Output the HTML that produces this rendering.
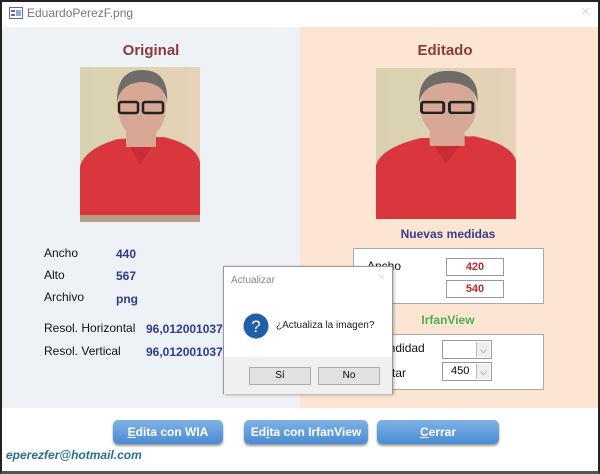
<!DOCTYPE html>
<html><head><meta charset="utf-8"><style>
*{margin:0;padding:0;box-sizing:border-box}
body{width:600px;height:474px;overflow:hidden;background:#fff;font-family:"Liberation Sans",sans-serif;position:relative}
.a{position:absolute}
.frame{left:0;top:0;width:600px;height:474px;border:2px solid #222;border-bottom:3px solid #555}
.lbl{font-size:12px;color:#111}
.val{font-size:12px;color:#2e3a8c;font-weight:bold}
.btn{background:linear-gradient(#7fb2e6,#4a8bd3);border-radius:5px;color:#fff;font-size:12px;font-weight:bold;text-align:center;line-height:24px;box-shadow:0 2px 2px #999}
.inp{background:#fff;border:1px solid #999;color:#b52b2b;font-size:11px;text-align:center;font-weight:bold}
.cmb{background:#fff;border:1px solid #999;font-size:11px}
.cmb i{position:absolute;right:1px;top:1px;bottom:1px;width:14px;background:#eee;border-left:1px solid #bbb;font-style:normal;font-size:9px;text-align:center;color:#666;line-height:16px}
</style></head><body>
<div class="a" style="left:2px;top:27px;width:298px;height:381px;background:#eef2f7"></div>
<div class="a" style="left:300px;top:27px;width:298px;height:381px;background:#fce6d3"></div>
<svg class="a" style="left:9px;top:7px" width="14" height="12"><rect x="0.5" y="0.5" width="13" height="11" fill="#fff" stroke="#5b6aa8"/><rect x="2" y="3" width="4" height="2" fill="#5b6aa8"/><rect x="2" y="7" width="4" height="2" fill="#5b6aa8"/><rect x="7" y="3" width="5" height="6" fill="#9aa6d6"/></svg>
<div class="a" style="left:27px;top:6px;font-size:12px;color:#777">EduardoPerezF.png</div>
<div class="a" style="left:580px;top:4px;font-size:13px;color:#ddd">✕</div>

<div class="a" style="left:2px;width:298px;top:42px;text-align:center;font-size:15px;font-weight:bold;color:#8b3a3a">Original</div>
<div class="a" style="left:300px;width:290px;top:42px;text-align:center;font-size:15px;font-weight:bold;color:#8b3a3a">Editado</div>

<svg class="a" style="left:80px;top:67px" width="120" height="155" viewBox="0 0 120 155" preserveAspectRatio="none">
<defs><linearGradient id="bg" x1="0" x2="1"><stop offset="0" stop-color="#d8d2b0"/><stop offset="1" stop-color="#e6d2b8"/></linearGradient></defs>
<rect width="120" height="155" fill="url(#bg)"/>
<path d="M0 100 Q4 82 38 72 L84 70 Q116 78 120 95 L120 155 L0 155Z" fill="#d9363e"/>
<path d="M46 72 L60 98 L78 70Z" fill="#c92c34"/>
<rect x="46" y="58" width="30" height="22" fill="#d9a793"/>
<ellipse cx="62" cy="40" rx="24" ry="32" fill="#d7a896"/>
<path d="M37 36 Q36 3 62 3 Q89 3 87 36 Q85 16 62 15 Q40 16 37 36Z" fill="#6f6c6a"/>
<rect x="39" y="35" width="19" height="11" rx="2" fill="none" stroke="#222" stroke-width="2.5"/>
<rect x="63" y="35" width="20" height="11" rx="2" fill="none" stroke="#222" stroke-width="2.5"/>
<rect x="0" y="148" width="120" height="7" fill="#b89a88"/>
</svg>
<svg class="a" style="left:376px;top:68px" width="140" height="151" viewBox="0 0 120 155" preserveAspectRatio="none">
<rect width="120" height="155" fill="url(#bg)"/>
<path d="M0 100 Q4 82 38 72 L84 70 Q116 78 120 95 L120 155 L0 155Z" fill="#d9363e"/>
<path d="M46 72 L60 98 L78 70Z" fill="#c92c34"/>
<rect x="46" y="58" width="30" height="22" fill="#d9a793"/>
<ellipse cx="62" cy="40" rx="24" ry="32" fill="#d7a896"/>
<path d="M37 36 Q36 3 62 3 Q89 3 87 36 Q85 16 62 15 Q40 16 37 36Z" fill="#6f6c6a"/>
<rect x="39" y="35" width="19" height="11" rx="2" fill="none" stroke="#222" stroke-width="2.5"/>
<rect x="63" y="35" width="20" height="11" rx="2" fill="none" stroke="#222" stroke-width="2.5"/>
</svg>

<div class="a lbl" style="left:44px;top:246px">Ancho</div><div class="a val" style="left:116px;top:247px">440</div>
<div class="a lbl" style="left:44px;top:268px">Alto</div><div class="a val" style="left:116px;top:269px">567</div>
<div class="a lbl" style="left:44px;top:290px">Archivo</div><div class="a val" style="left:116px;top:292px">png</div>
<div class="a lbl" style="left:44px;top:321px">Resol. Horizontal</div><div class="a val" style="left:146px;top:322px">96,0120010375</div>
<div class="a lbl" style="left:44px;top:344px">Resol. Vertical</div><div class="a val" style="left:146px;top:345px">96,0120010375</div>

<div class="a" style="left:353px;width:190px;top:227px;text-align:center;font-size:12px;font-weight:bold;color:#3a3a8c">Nuevas medidas</div>
<div class="a" style="left:353px;top:248px;width:191px;height:56px;background:#fff;border:1px solid #aaa"></div>
<div class="a lbl" style="left:367px;top:259px">Ancho</div>
<div class="a inp" style="left:446px;top:258px;width:58px;height:18px;line-height:16px">420</div>
<div class="a inp" style="left:446px;top:280px;width:58px;height:18px;line-height:16px">540</div>
<div class="a" style="left:353px;width:190px;top:313px;text-align:center;font-size:12px;font-weight:bold;color:#4caf50">IrfanView</div>
<div class="a" style="left:353px;top:334px;width:191px;height:56px;background:#fff;border:1px solid #aaa"></div>
<div class="a lbl" style="left:360px;top:341px">Profundidad</div>
<div class="a lbl" style="left:360px;top:366px">Recortar</div>
<div class="a cmb" style="left:442px;top:340px;width:50px;height:19px"><i>⌵</i></div>
<div class="a cmb" style="left:442px;top:362px;width:50px;height:19px;padding:2px 8px">450<i>⌵</i></div>

<div class="a" style="left:223px;top:266px;width:170px;height:128px;background:#fff;border:1px solid #999;box-shadow:1px 1px 3px rgba(0,0,0,.3)">
 <div class="a" style="left:7px;top:8px;font-size:10px;color:#888">Actualizar</div>
 <div class="a" style="left:154px;top:5px;font-size:9px;color:#ddd">✕</div>
 <svg class="a" style="left:19px;top:46px" width="26" height="26"><circle cx="13" cy="13" r="12.5" fill="#1e5fa8"/><text x="13" y="19" text-anchor="middle" font-family="Liberation Sans" font-size="17" fill="#fff">?</text></svg>
 <div class="a" style="left:52px;top:53px;font-size:10px;color:#222;white-space:nowrap">¿Actualiza la imagen?</div>
 <div class="a" style="left:0;top:90px;width:168px;height:37px;background:#f0f0f0"></div>
 <div class="a" style="left:25px;top:100px;width:62px;height:18px;background:#e1e1e1;border:1px solid #adadad;font-size:10px;text-align:center;line-height:16px">Sí</div>
 <div class="a" style="left:94px;top:100px;width:62px;height:18px;background:#e1e1e1;border:1px solid #adadad;font-size:10px;text-align:center;line-height:16px">No</div>
</div>

<div class="a btn" style="left:113px;top:420px;width:110px;height:24px"><u>E</u>dita con WIA</div>
<div class="a btn" style="left:244px;top:420px;width:124px;height:24px">Ed<u>i</u>ta con IrfanView</div>
<div class="a btn" style="left:377px;top:420px;width:122px;height:24px"><u>C</u>errar</div>
<div class="a" style="left:6px;top:448px;font-size:12px;font-style:italic;font-weight:bold;color:#2a6f8f">eperezfer@hotmail.com</div>
<div class="a frame"></div>
</body></html>
